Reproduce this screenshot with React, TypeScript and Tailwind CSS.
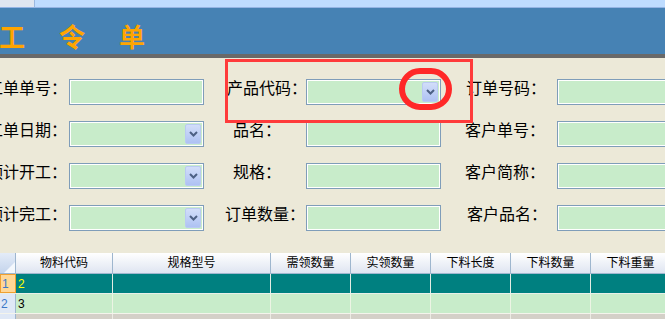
import React from 'react'

const font = { fontFamily: '"Liberation Sans", "Noto Sans CJK SC", sans-serif' }

function Dropdown() {
  return (
    <div className="my-[2px] mr-[2px] w-[16px] shrink-0 flex items-center justify-center rounded-[2px] border border-[#b9c9f3] bg-gradient-to-b from-[#d2def9] to-[#aec2f3]">
      <svg width="9" height="6" viewBox="0 0 9 6">
        <path d="M1 1 L4.5 4.5 L8 1" fill="none" stroke="#4d6185" strokeWidth="2" />
      </svg>
    </div>
  )
}

function Field({ drop = false, w = 'w-[135px]' }: { drop?: boolean; w?: string }) {
  return (
    <div className={`${w} shrink-0 h-[26px] flex border border-[#7f9db9] bg-[#c8ecca] shadow-[inset_0_0_0_1px_#ffffff]`}>
      <div className="flex-1" />
      {drop && <Dropdown />}
    </div>
  )
}

export default function App() {
  const rows = [
    { l1: '工单单号：', d1: false, l2: '产品代码：', p2: 'pl-[23px]', d2: true, l3: '订单号码：', p3: 'pl-[25px]' },
    { l1: '工单日期：', d1: true, l2: '品名：', p2: 'pl-[29px]', d2: false, l3: '客户单号：', p3: 'pl-[24px]' },
    { l1: '预计开工：', d1: true, l2: '规格：', p2: 'pl-[29px]', d2: false, l3: '客户简称：', p3: 'pl-[24px]' },
    { l1: '预计完工：', d1: true, l2: '订单数量：', p2: 'pl-[21px]', d2: false, l3: '客户品名：', p3: 'pl-[26px]' },
  ]

  const cols = [
    { name: '物料代码', w: 'w-[97px]' },
    { name: '规格型号', w: 'w-[158px]' },
    { name: '需领数量', w: 'w-[80px]' },
    { name: '实领数量', w: 'w-[80px]' },
    { name: '下料长度', w: 'w-[80px]' },
    { name: '下料数量', w: 'w-[80px]' },
    { name: '下料重量', w: 'w-[80px]' },
  ]

  return (
    <div className="relative w-[665px] h-[319px] overflow-hidden bg-[#ece9d8] text-black" style={font}>
      {/* top strip */}
      <div className="h-[8px] flex border-b border-[#94b4e4]">
        <div className="w-[35px] bg-[#dfe6f0] border-r border-[#9ab8e0]" />
        <div className="flex-1 bg-[#bedcff]" />
      </div>

      {/* title band */}
      <div className="h-[46px] bg-[#4682b4] flex items-center">
        <span
          className="text-[26px] font-bold tracking-[34px] text-[#ffa500] whitespace-nowrap -ml-[1px] mt-[8px]"
          style={{ fontFamily: '"Noto Sans CJK SC", sans-serif' }}
        >
          工令单
        </span>
      </div>
      <div className="h-[4px] bg-[#696969]" />

      {/* form */}
      <div className="pt-[21px] flex flex-col gap-[16px] text-[16px]">
        {rows.map((r) => (
          <div key={r.l1} className="flex h-[26px] items-center whitespace-nowrap">
            <div className="w-[69px] shrink-0 flex justify-end pr-[2px] -mt-[6px]">
              <span>{r.l1}</span>
            </div>
            <Field drop={r.d1} />
            <div className={`w-[102px] shrink-0 ${r.p2} -mt-[6px]`}>
              <span>{r.l2}</span>
            </div>
            <Field drop={r.d2} />
            <div className={`w-[116px] shrink-0 ${r.p3} -mt-[6px]`}>
              <span>{r.l3}</span>
            </div>
            <Field w="w-[130px]" />
          </div>
        ))}
      </div>

      {/* grid */}
      <div className="mt-[22px] text-[12px]">
        <div className="flex h-[21px] border-b border-[#9eb6ce]">
          <div className="w-[16px] shrink-0 border-r border-[#9eb6ce] bg-gradient-to-b from-[#e4ecf8] to-[#c4d4ec] flex items-end justify-end">
            <svg width="11" height="11" viewBox="0 0 11 11">
              <path d="M11 0 L11 11 L0 11 Z" fill="#f4f8fd" />
            </svg>
          </div>
          {cols.map((c) => (
            <div
              key={c.name}
              className={`${c.w} shrink-0 border-r border-[#9eb6ce] bg-gradient-to-b from-[#ffffff] to-[#dfe5f1] flex items-center justify-center`}
            >
              {c.name}
            </div>
          ))}
        </div>
        <div className="flex h-[20px] border-b border-[#e8efe8]">
          <div className="w-[16px] shrink-0 border border-[#f0a030] bg-[#ffd796] text-[#3c78c8] flex items-center pl-[1px]">1</div>
          {cols.map((c, i) => (
            <div key={c.name} className={`${c.w} shrink-0 border-r border-[#e4ece4] bg-[#008080] text-[#ffff00] flex items-center pl-[2px]`}>
              {i === 0 ? '2' : ''}
            </div>
          ))}
        </div>
        <div className="flex h-[20px] border-b border-[#f4f4ec]">
          <div className="w-[16px] shrink-0 border-r border-[#9eb6ce] bg-[#dfe8f6] text-[#3c78c8] flex items-center pl-[1px]">2</div>
          {cols.map((c, i) => (
            <div key={c.name} className={`${c.w} shrink-0 border-r border-[#ecf4e4] bg-[#c8ecca] flex items-center pl-[2px]`}>
              {i === 0 ? '3' : ''}
            </div>
          ))}
        </div>
        <div className="flex h-[20px]">
          <div className="w-[16px] shrink-0 border-r border-[#9eb6ce] bg-[#dfe8f6]" />
          {cols.map((c) => (
            <div key={c.name} className={`${c.w} shrink-0 border-r border-[#ecebe4] bg-[#d4d0c8]`} />
          ))}
        </div>
      </div>

      {/* red annotation */}
      <div className="absolute left-[225px] top-[59px] w-[248px] h-[64px] border-[3px] border-[#ff3b3b]" />
      <div className="absolute left-[399px] top-[68px] w-[53px] h-[42px] rounded-full border-[6px] border-[#ff2828]" />
    </div>
  )
}
